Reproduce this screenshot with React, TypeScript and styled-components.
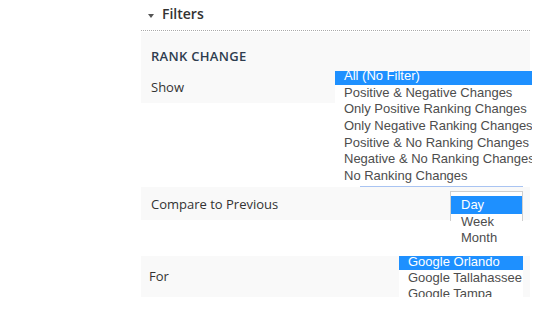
import React from 'react';
import styled, { createGlobalStyle } from 'styled-components';

const GlobalStyle = createGlobalStyle`
  body {
    margin: 0;
    background: #fff;
    font-family: "Open Sans", "Liberation Sans", sans-serif;
  }
`;

const Page = styled.div`
  padding-left: 141px;
  width: 389px;
`;

const Header = styled.div`
  display: flex;
  align-items: center;
  height: 30px;
  padding-left: 7px;
  border-bottom: 1px dotted #a9a9a9;
`;

const Caret = styled.span`
  width: 0;
  height: 0;
  border-left: 3px solid transparent;
  border-right: 3px solid transparent;
  border-top: 4px solid #555;
  margin-right: 8px;
  margin-top: 1px;
`;

const HeaderTitle = styled.span`
  font-size: 14px;
  font-weight: 600;
  color: #333;
  line-height: 18px;
  margin-top: -2px;
`;

const Group = styled.div`
  margin-top: 1px;
  background: #f9f9f9;
`;

const GroupTitle = styled.div`
  height: 38px;
  box-sizing: border-box;
  padding: 15px 0 0 10px;
  font-size: 13px;
  font-weight: 600;
  letter-spacing: 0.3px;
  line-height: 18px;
  color: #2e3d4f;
`;

const Row = styled.div<{ $height: number; $gap?: number; $bg?: boolean }>`
  position: relative;
  display: flex;
  align-items: center;
  height: ${({ $height }) => $height}px;
  margin-top: ${({ $gap }) => $gap ?? 0}px;
  padding-left: 10px;
  background: ${({ $bg }) => ($bg ? '#f9f9f9' : 'transparent')};
`;

const Label = styled.span<{ $dx?: number; $dy?: number }>`
  font-size: 13px;
  color: #333;
  line-height: 18px;
  margin-left: ${({ $dx }) => $dx ?? 0}px;
  margin-top: ${({ $dy }) => $dy ?? 1}px;
`;

const ListBox = styled.div<{ $left: number; $top: number; $width: number }>`
  position: absolute;
  left: ${({ $left }) => $left}px;
  top: ${({ $top }) => $top}px;
  width: ${({ $width }) => $width}px;
  background: #fff;
`;

const Viewport = styled.div<{ $height: number; $scroll: number }>`
  height: ${({ $height }) => $height}px;
  overflow: hidden;
  & > :first-child {
    margin-top: -${({ $scroll }) => $scroll}px;
  }
`;

const Option = styled.div<{ $selected?: boolean; $h: number; $pad: number }>`
  height: ${({ $h }) => $h}px;
  line-height: ${({ $h }) => $h}px;
  padding-left: ${({ $pad }) => $pad}px;
  font-family: "Liberation Sans", Arial, sans-serif;
  font-size: 13px;
  white-space: nowrap;
  color: ${({ $selected }) => ($selected ? '#fff' : '#4d4d4d')};
  background: ${({ $selected }) => ($selected ? '#1e90ff' : 'transparent')};
`;

const Underline = styled.div<{ $inset: number; $width: number; $color: string }>`
  height: 1px;
  margin-left: ${({ $inset }) => $inset}px;
  width: ${({ $width }) => $width}px;
  background: ${({ $color }) => $color};
`;

const SelectBox = styled.div`
  position: absolute;
  left: 309px;
  top: 4px;
  width: 71px;
  height: 25px;
  padding-top: 4px;
  border: 1px solid #cfcfcf;
  border-bottom: none;
  background: #fff;
`;

const SelectList = styled.div`
  position: relative;
  z-index: 1;
`;

const showOptions = [
  'All (No Filter)',
  'Positive & Negative Changes',
  'Only Positive Ranking Changes',
  'Only Negative Ranking Changes',
  'Positive & No Ranking Changes',
  'Negative & No Ranking Changes',
  'No Ranking Changes',
];

const periods = ['Day', 'Week', 'Month'];

const locations = ['Google Orlando', 'Google Tallahassee', 'Google Tampa'];

export default function App() {
  return (
    <>
      <GlobalStyle />
      <Page>
        <Header>
          <Caret />
          <HeaderTitle>Filters</HeaderTitle>
        </Header>

        <Group>
          <GroupTitle>RANK CHANGE</GroupTitle>
          <Row $height={33}>
            <Label>Show</Label>
            <ListBox $left={194} $top={1} $width={197}>
              <Viewport $height={115} $scroll={3}>
                {showOptions.map((o, i) => (
                  <Option key={o} $selected={i === 0} $h={16.67} $pad={9}>
                    {o}
                  </Option>
                ))}
              </Viewport>
              <Underline $inset={25} $width={163} $color="#a9c4f2" />
            </ListBox>
          </Row>
        </Group>

        <Row $height={33} $gap={84} $bg>
          <Label>Compare to Previous</Label>
          <SelectBox>
            <SelectList>
              {periods.map((p, i) => (
                <Option key={p} $selected={i === 0} $h={i === 0 ? 18 : 16} $pad={10}>
                  {p}
                </Option>
              ))}
            </SelectList>
          </SelectBox>
        </Row>

        <Row $height={41} $gap={36} $bg>
          <Label $dx={-2} $dy={-2}>For</Label>
          <ListBox $left={258} $top={0} $width={124}>
            <Viewport $height={48} $scroll={2}>
              {locations.map((l, i) => (
                <Option key={l} $selected={i === 0} $h={16} $pad={9}>
                  {l}
                </Option>
              ))}
            </Viewport>
            <Underline $inset={0} $width={124} $color="#6f9fe0" />
          </ListBox>
        </Row>
      </Page>
    </>
  );
}
